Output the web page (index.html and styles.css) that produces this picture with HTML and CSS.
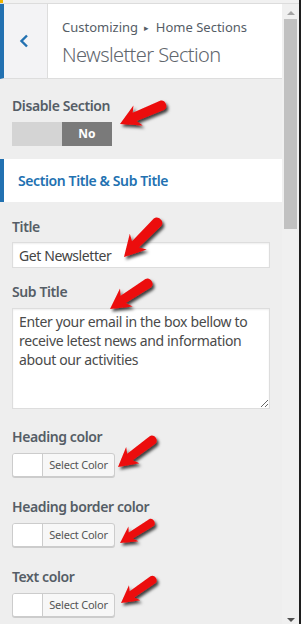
FILE: index.html
```html
<!DOCTYPE html>
<html lang="en">
<head>
    <meta charset="UTF-8">
    <meta name="viewport" content="width=device-width, initial-scale=1.0">
    <title>Customizing - Newsletter Section</title>
    <link rel="stylesheet" href="styles.css">
</head>
<body>
    <div class="frame">
        <div class="main">
            <!-- Top strip -->
            <div class="topstrip"><span class="notice"></span></div>

            <div class="body-row">
                <div class="panel">
                    <!-- Panel header -->
                    <div class="panel-header">
                        <div class="back">
                            <svg width="10" height="14" viewBox="0 0 10 14">
                                <path d="M8 1.5 L2.5 7 L8 12.5" fill="none" stroke="#2271b1" stroke-width="2.4"/>
                            </svg>
                        </div>
                        <div class="titles">
                            <div class="crumb">Customizing <span class="sep">&#9656;</span> Home Sections</div>
                            <div class="panel-title">Newsletter Section</div>
                        </div>
                    </div>

                    <!-- Disable toggle -->
                    <div class="control control-first">
                        <label class="label">Disable Section</label>
                        <div class="switch">
                            <span class="switch-off"></span>
                            <span class="switch-on">No</span>
                        </div>
                    </div>

                    <!-- Section heading -->
                    <div class="section-head">Section Title &amp; Sub Title</div>

                    <div class="control control-title">
                        <label class="label" for="title">Title</label>
                        <input type="text" id="title" class="text-input" value="Get Newsletter">
                    </div>

                    <div class="control control-sub">
                        <label class="label" for="subtitle">Sub Title</label>
                        <textarea id="subtitle" class="text-area">Enter your email in the box bellow to receive letest news and information about our activities</textarea>
                    </div>

                    <div class="control control-color first-color">
                        <label class="label">Heading color</label>
                        <div class="color-btn"><span class="swatch"></span><span class="color-text">Select Color</span></div>
                    </div>

                    <div class="control control-color">
                        <label class="label">Heading border color</label>
                        <div class="color-btn"><span class="swatch"></span><span class="color-text">Select Color</span></div>
                    </div>

                    <div class="control control-color">
                        <label class="label">Text color</label>
                        <div class="color-btn"><span class="swatch"></span><span class="color-text">Select Color</span></div>
                    </div>
                </div>

                <!-- Scrollbar -->
                <div class="scrollbar">
                    <div class="scroll-up"></div>
                    <div class="thumb"></div>
                    <div class="scroll-space"></div>
                    <div class="scroll-down"></div>
                </div>
            </div>
        </div>
        <div class="edge"></div>
    </div>

    <!-- Annotation arrows -->
    <svg class="arrows" width="301" height="624" viewBox="0 0 301 624">
        <defs>
            <filter id="shadow" x="-50%" y="-50%" width="200%" height="200%">
                <feDropShadow dx="2" dy="2.5" stdDeviation="1.6" flood-color="#000" flood-opacity="0.75"/>
            </filter>
            <path id="arrow" d="M0 0 L-19 -10.5 L-15.5 -4 L-44 -5.5 C-49 -5 -49 3.5 -44 4 L-15.5 4.5 L-19 10.5 Z"/>
        </defs>
        <g fill="#ec0c0c" filter="url(#shadow)">
            <use href="#arrow" transform="translate(120 124) rotate(155) scale(1.05)"/>
            <use href="#arrow" transform="translate(124 257) rotate(133) scale(1.1)"/>
            <use href="#arrow" transform="translate(110 309) rotate(145) scale(1.05)"/>
            <use href="#arrow" transform="translate(118 467) rotate(141) scale(1)"/>
            <use href="#arrow" transform="translate(120 543) rotate(146) scale(0.85)"/>
            <use href="#arrow" transform="translate(121 603) rotate(143) scale(0.9)"/>
        </g>
    </svg>
</body>
</html>
```

FILE: styles.css
```css
/* Reset */
* {
    margin: 0;
    padding: 0;
    box-sizing: border-box;
}

html, body {
    width: 301px;
    height: 624px;
    overflow: hidden;
    font-family: 'Noto Sans', 'Open Sans', sans-serif;
    color: #555d66;
    background: #eee;
}

/* Frame */
.frame {
    display: flex;
    height: 624px;
}

.main {
    width: 299px;
    display: flex;
    flex-direction: column;
}

.edge {
    width: 2px;
    background: #1e1e1e;
}

.topstrip {
    height: 4px;
    background: #f1f1f1;
    border-bottom: 1px solid #dcdcdc;
}

.notice {
    display: block;
    width: 3px;
    height: 3px;
    background: #f0b400;
}

.body-row {
    display: flex;
    flex: 1;
}

/* Panel */
.panel {
    width: 282px;
    background: #eee;
}

.panel-header {
    display: flex;
    height: 75px;
    background: #fff;
    border-left: 4px solid #2271b1;
    border-bottom: 1px solid #ddd;
}

.back {
    width: 44px;
    background: #f3f3f5;
    border-right: 1px solid #ddd;
    display: flex;
    align-items: center;
    justify-content: center;
    padding-right: 3px;
}

.titles {
    padding: 14px 0 0 14px;
}

.crumb {
    font-size: 13px;
    line-height: 18px;
    color: #555d66;
}

.sep {
    font-size: 9px;
    position: relative;
    top: -1px;
    padding: 0 3px;
}

.panel-title {
    font-size: 20px;
    font-weight: 300;
    line-height: 28px;
    letter-spacing: -0.6px;
    margin-top: 3px;
    color: #5f666d;
}

/* Controls */
.control {
    padding: 0 12px;
}

.label {
    display: block;
    font-size: 14px;
    font-weight: 600;
    line-height: 20px;
    letter-spacing: -0.4px;
    margin-bottom: 6px;
}

.control-first {
    padding-top: 17px;
}

.switch {
    display: flex;
    width: 100px;
    height: 24px;
}

.switch-off {
    width: 50px;
    background: #d4d4d4;
}

.switch-on {
    width: 50px;
    background: #7a7a7a;
    color: #fff;
    font-size: 12px;
    font-weight: 700;
    text-align: center;
    line-height: 24px;
}

.section-head {
    margin-top: 13px;
    height: 43px;
    background: #fff;
    border-left: 4px solid #2271b1;
    padding-left: 14px;
    font-size: 14px;
    font-weight: 600;
    line-height: 43px;
    letter-spacing: -0.4px;
    color: #2271b1;
}

.control-title {
    margin-top: 15px;
}

.control-title .label {
    margin-bottom: 5px;
}

.text-input {
    display: block;
    width: 258px;
    height: 26px;
    padding: 0 6px;
    border: 1px solid #ddd;
    background: #fff;
    font-family: inherit;
    font-size: 14px;
    letter-spacing: -0.4px;
    color: #444;
    box-shadow: inset 0 1px 2px rgba(0, 0, 0, 0.07);
}

.control-sub {
    margin-top: 14px;
}

.text-area {
    display: block;
    width: 258px;
    height: 101px;
    padding: 3px 6px;
    border: 1px solid #ddd;
    background: #fff;
    font-family: inherit;
    font-size: 14px;
    line-height: 19px;
    letter-spacing: -0.35px;
    color: #4a4a4a;
    resize: vertical;
    box-shadow: inset 0 1px 2px rgba(0, 0, 0, 0.07);
}

.control-color {
    margin-top: 20px;
}

.first-color {
    margin-top: 18px;
}

/* Color picker button */
.color-btn {
    display: flex;
    width: 103px;
    height: 24px;
    border: 1px solid #ccc;
    border-radius: 3px;
    background: #f7f7f7;
    box-shadow: 0 1px 0 #ccc;
    overflow: hidden;
}

.swatch {
    width: 30px;
    background: #fff;
    border-right: 1px solid #ccc;
}

.color-text {
    flex: 1;
    font-size: 11px;
    line-height: 22px;
    letter-spacing: -0.2px;
    text-align: center;
    color: #555;
}

/* Scrollbar */
.scrollbar {
    width: 17px;
    background: #f0f0f0;
    display: flex;
    flex-direction: column;
    align-items: center;
}

.scroll-up {
    width: 0;
    height: 0;
    margin-top: 7px;
    border-left: 4px solid transparent;
    border-right: 4px solid transparent;
    border-bottom: 4px solid #a3a3a3;
}

.thumb {
    width: 13px;
    height: 210px;
    margin-top: 4px;
    background: #c1c1c1;
}

.scroll-space {
    flex: 1;
}

.scroll-down {
    width: 0;
    height: 0;
    margin-bottom: 2px;
    border-left: 4px solid transparent;
    border-right: 4px solid transparent;
    border-top: 4px solid #505050;
}

/* Annotation overlay */
.arrows {
    position: absolute;
    top: 0;
    left: 0;
    pointer-events: none;
}
```
